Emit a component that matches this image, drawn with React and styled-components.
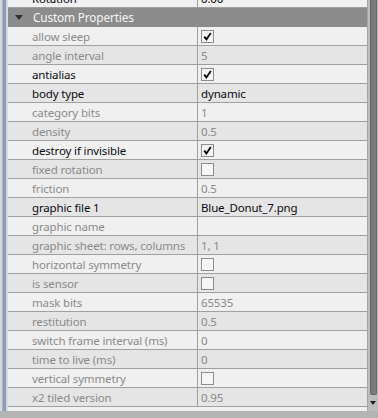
import React from "react";
import styled, { createGlobalStyle } from "styled-components";

const Global = createGlobalStyle`
  html, body {
    margin: 0;
    padding: 0;
    background: #b4b4b4;
    overflow: hidden;
  }
  body {
    font-family: "Noto Sans", "Open Sans", sans-serif;
    font-size: 11.5px;
    letter-spacing: -0.15px;
  }
`;

const Frame = styled.div`
  width: 378px;
  height: 418px;
  display: flex;
  flex-direction: column;
  overflow: hidden;
`;

const Body = styled.div`
  display: flex;
  flex: 1;
  min-height: 0;
`;

const Rail = styled.div`
  width: 8px;
  flex: none;
  display: flex;
  background: #d6d8dc;
`;

const RailStripe = styled.div`
  width: 3px;
  margin-left: 2px;
  background: #8c9cb8;
  border-left: 1px solid #a8b4c8;
`;

const Grid = styled.div`
  flex: 1;
  display: flex;
  flex-direction: column;
  overflow: hidden;
  background: #f0f0f0;
`;

const Row = styled.div`
  display: flex;
  flex: none;
  height: 18px;
  border-bottom: 1px solid #a0a0a0;
  background: ${(p) => (p.$odd ? "#f0f0f0" : "#e5e5e5")};
  color: ${(p) => (p.$dim ? "#8a8a8a" : "#0a0a12")};
  line-height: 19px;
  white-space: nowrap;
  &:first-child {
    margin-top: -11px;
  }
`;

const Label = styled.div`
  width: 165px;
  padding-left: 24px;
  flex: none;
  overflow: hidden;
  border-right: 1px solid #a0a0a0;
`;

const Value = styled.div`
  flex: 1;
  padding-left: 3px;
  display: flex;
  align-items: center;
`;

const Header = styled.div`
  display: flex;
  align-items: center;
  flex: none;
  height: 18px;
  background: #8c8c8c;
  border-bottom: 1px solid #8a8a8a;
  color: #f4f4f4;
  font-size: 11.8px;
`;

const Caret = styled.span`
  width: 0;
  height: 0;
  margin: 0 10px 0 7px;
  border-left: 4px solid transparent;
  border-right: 4px solid transparent;
  border-top: 5px solid #303030;
`;

const Box = styled.span`
  width: 11px;
  height: 11px;
  border: 1px solid #8c8c8c;
  background: #f6f6f6;
  display: flex;
  align-items: center;
  justify-content: center;
  margin-top: 1px;
`;

const Filler = styled.div`
  height: 4px;
  flex: none;
  border-bottom: 1px solid #a0a0a0;
  background: #f0f0f0;
`;

const Scroll = styled.div`
  width: 10px;
  flex: none;
  display: flex;
  flex-direction: column;
  background: #bcbcbc;
  border-left: 1px solid #a4a4a4;
`;

const Thumb = styled.div`
  flex: 1;
  margin: 0 1px 0 2px;
  background: #7a7a7a;
  border: 1px solid #666;
  border-top: none;
  border-radius: 0 0 2px 2px;
`;

const Arrow = styled.div`
  height: 16px;
  display: flex;
  align-items: center;
  justify-content: center;
  &::after {
    content: "";
    border-left: 3px solid transparent;
    border-right: 3px solid transparent;
    border-top: 4px solid #202020;
  }
`;

const Footer = styled.div`
  height: 7px;
  flex: none;
  background: #b4b4b4;
`;

const Check = ({ on }) => (
  <Box>
    {on && (
      <svg width="9" height="9" viewBox="0 0 9 9">
        <path d="M1.2 4.6 L3.4 7.4 L7.8 1" fill="none" stroke="#000" strokeWidth="1.8" />
      </svg>
    )}
  </Box>
);

const top = { label: "Rotation", value: "0.00" };

const props = [
  { label: "allow sleep", dim: true, check: true },
  { label: "angle interval", dim: true, value: "5" },
  { label: "antialias", check: true },
  { label: "body type", value: "dynamic" },
  { label: "category bits", dim: true, value: "1" },
  { label: "density", dim: true, value: "0.5" },
  { label: "destroy if invisible", check: true },
  { label: "fixed rotation", dim: true, check: false },
  { label: "friction", dim: true, value: "0.5" },
  { label: "graphic file 1", value: "Blue_Donut_7.png" },
  { label: "graphic name", dim: true, value: "" },
  { label: "graphic sheet: rows, columns", dim: true, value: "1, 1" },
  { label: "horizontal symmetry", dim: true, check: false },
  { label: "is sensor", dim: true, check: false },
  { label: "mask bits", dim: true, value: "65535" },
  { label: "restitution", dim: true, value: "0.5" },
  { label: "switch frame interval (ms)", dim: true, value: "0" },
  { label: "time to live (ms)", dim: true, value: "0" },
  { label: "vertical symmetry", dim: true, check: false },
  { label: "x2 tiled version", dim: true, value: "0.95" },
];

const App = () => {
  return (
    <Frame>
      <Global />
      <Body>
        <Rail>
          <RailStripe />
        </Rail>
        <Grid>
          <Row $odd>
            <Label>{top.label}</Label>
            <Value>{top.value}</Value>
          </Row>
          <Header>
            <Caret />
            Custom Properties
          </Header>
          {props.map((p, i) => (
            <Row key={p.label} $odd={i % 2 === 0} $dim={p.dim}>
              <Label>{p.label}</Label>
              <Value>{"check" in p ? <Check on={p.check} /> : p.value}</Value>
            </Row>
          ))}
          <Filler />
        </Grid>
        <Scroll>
          <Thumb />
          <Arrow />
        </Scroll>
      </Body>
      <Footer />
    </Frame>
  );
};

export default App;
